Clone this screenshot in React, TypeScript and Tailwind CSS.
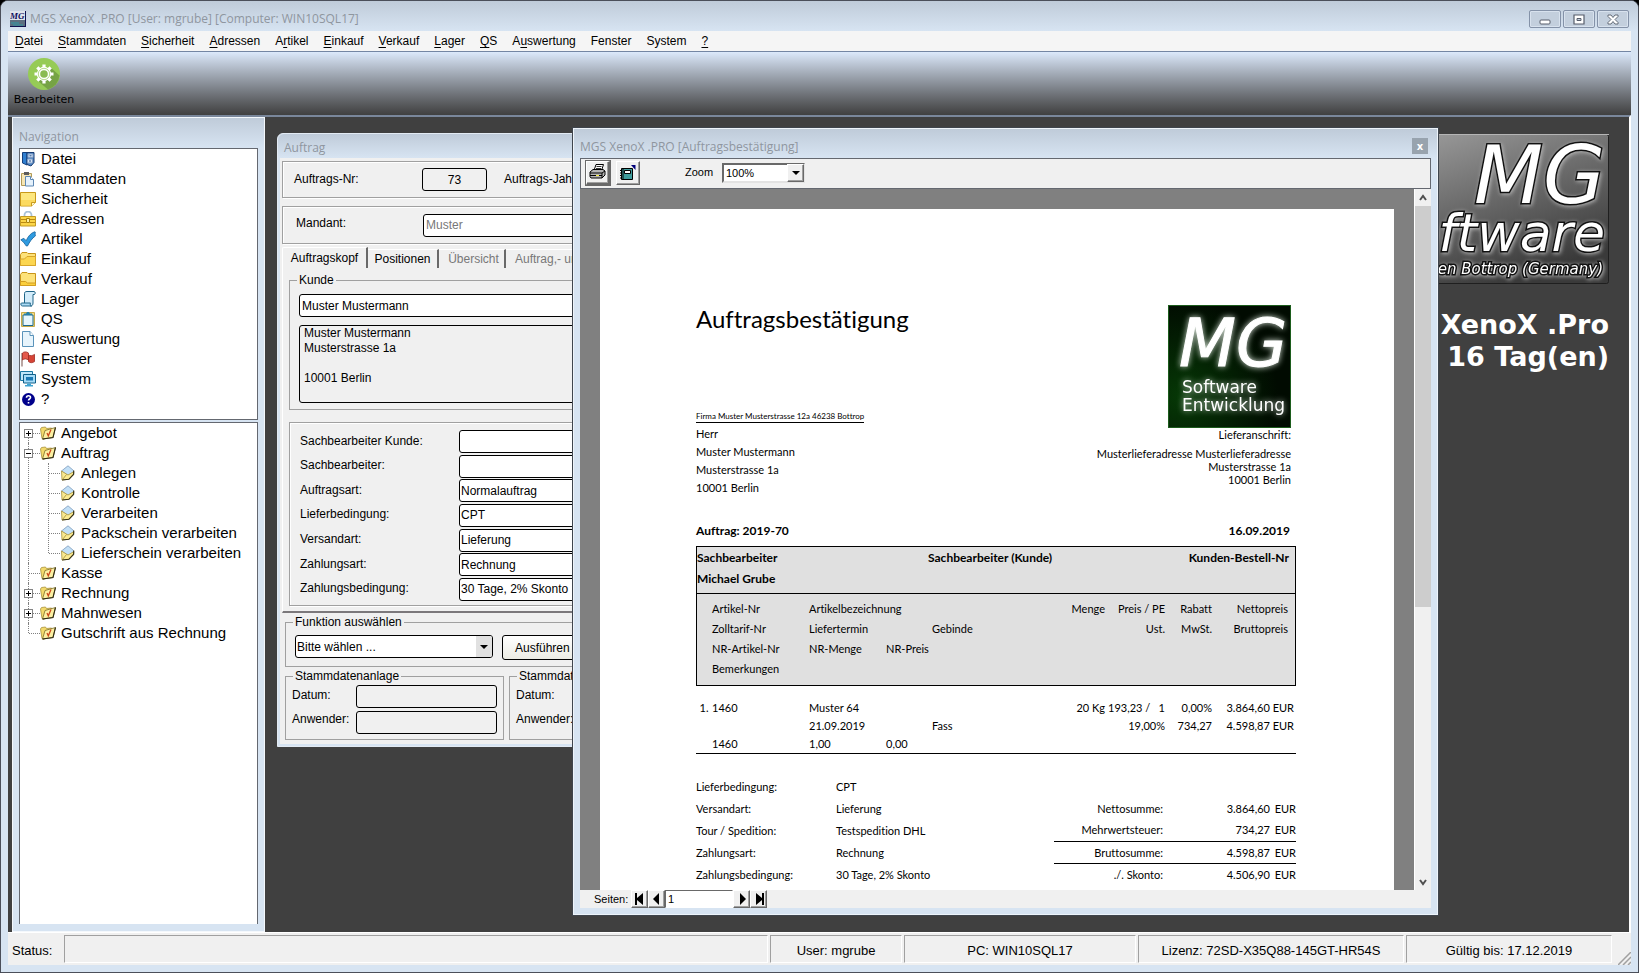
import { Fragment, type ReactNode } from "react";
import clsx from "clsx";

const MENU: Array<[string, string, string]> = [
  ["", "D", "atei"],
  ["", "S", "tammdaten"],
  ["", "S", "icherheit"],
  ["", "A", "dressen"],
  ["A", "r", "tikel"],
  ["", "E", "inkauf"],
  ["", "V", "erkauf"],
  ["", "L", "ager"],
  ["", "Q", "S"],
  ["A", "u", "swertung"],
  ["Fenster", "", ""],
  ["System", "", ""],
  ["", "?", ""],
];

const NAV_ITEMS = [
  "Datei",
  "Stammdaten",
  "Sicherheit",
  "Adressen",
  "Artikel",
  "Einkauf",
  "Verkauf",
  "Lager",
  "QS",
  "Auswertung",
  "Fenster",
  "System",
  "?",
];

interface TreeNode {
  label: string;
  state?: "open" | "closed";
  children?: string[];
}

const TREE: TreeNode[] = [
  { label: "Angebot", state: "closed" },
  {
    label: "Auftrag",
    state: "open",
    children: [
      "Anlegen",
      "Kontrolle",
      "Verarbeiten",
      "Packschein verarbeiten",
      "Lieferschein verarbeiten",
    ],
  },
  { label: "Kasse" },
  { label: "Rechnung", state: "closed" },
  { label: "Mahnwesen", state: "closed" },
  { label: "Gutschrift aus Rechnung" },
];

const ORDER_FIELDS = [
  { id: "sb-kunde", label: "Sachbearbeiter Kunde:", value: "" },
  { id: "sb", label: "Sachbearbeiter:", value: "" },
  { id: "auftragsart", label: "Auftragsart:", value: "Normalauftrag" },
  { id: "lieferbedingung", label: "Lieferbedingung:", value: "CPT" },
  { id: "versandart", label: "Versandart:", value: "Lieferung" },
  { id: "zahlungsart", label: "Zahlungsart:", value: "Rechnung" },
  { id: "zahlungsbedingung", label: "Zahlungsbedingung:", value: "30 Tage, 2% Skonto" },
];

const TERMS = [
  ["Lieferbedingung:", "CPT"],
  ["Versandart:", "Lieferung"],
  ["Tour / Spedition:", "Testspedition DHL"],
  ["Zahlungsart:", "Rechnung"],
  ["Zahlungsbedingung:", "30 Tage, 2% Skonto"],
];

const SUMS = [
  { label: "Nettosumme:", value: "3.864,60", line: false },
  { label: "Mehrwertsteuer:", value: "734,27", line: false },
  { label: "Bruttosumme:", value: "4.598,87", line: true },
  { label: "./. Skonto:", value: "4.506,90", line: true },
];

function Svg({ children }: { children: ReactNode }) {
  return (
    <svg className="h-4 w-4 shrink-0" viewBox="0 0 16 16" aria-hidden="true">
      {children}
    </svg>
  );
}

function NavIcon({ name }: { name: string }) {
  switch (name) {
    case "Datei":
      return (
        <Svg>
          <path d="M2.5 1.5H7v12.500L2.500 12z" fill="#2f7fd0" stroke="#123f7d" />
          <path d="M7 1.500h7v10L11 15l-4-1.500z" fill="#4f86c6" stroke="#183c72" />
          <path d="M8 3h5v3.500H8zM7.500 8h5v4h-5z" fill="#d5e3f4" stroke="#7f9cc4" />
          <path d="M9.500 4.800h2M9 10h2" stroke="#234f8d" />
        </Svg>
      );
    case "Stammdaten":
      return (
        <Svg>
          <path d="M1.500 2.500h10v12h-10z" fill="#f7e6b4" stroke="#b19a57" />
          <path d="M4 1h5v3H4z" fill="#5b5b5b" />
          <path d="M5.500 5.500h5l3 3v6.500h-8z" fill="#e6f2fc" stroke="#5d87b3" />
          <path d="M10.500 5.500v3h3" fill="#fff" stroke="#5d87b3" />
        </Svg>
      );
    case "Sicherheit":
      return (
        <Svg>
          <path d="M.5 1.500h15v10l-4 3.500H.5z" fill="#fde77f" stroke="#c99a1b" />
          <path d="M1 9h14v2.500L11.500 15H1z" fill="#fbd24a" opacity=".6" />
          <path d="M11.500 15v-3.500h4" fill="#fff6c9" stroke="#c99a1b" />
        </Svg>
      );
    case "Adressen":
      return (
        <Svg>
          <path d="M4.500 6V4a3.500 3.500 0 0 1 7 0v2" fill="none" stroke="#a9c2d8" strokeWidth="1.800" />
          <path d="M.5 5.500h15v9.500H.5z" fill="#fbd548" stroke="#c39a22" />
          <path d="M1 8.500h5M10 8.500h5M1 11.500h5M10 11.500h5" stroke="#bb8a12" />
          <path d="M6.500 7.500h3v4h-3z" fill="#fff1a8" stroke="#a8820f" />
        </Svg>
      );
    case "Artikel":
      return (
        <Svg>
          <path
            d="M.8 8.800l3-1.500 2.400 2.400C8 5.500 10.500 2.300 14.500.8l.8.3c-.3 1.200-.3 2.600.1 3.800C11.800 7.500 9.500 11 7.500 15H6.300C4.800 12.500 3 10.500.8 8.800z"
            fill="#2f9be0"
            stroke="#17629c"
            strokeWidth=".8"
          />
        </Svg>
      );
    case "Einkauf":
      return (
        <Svg>
          <path d="M.5 3.500l1.500-2h5l1 1h7.500v12H.5z" fill="#fde27a" stroke="#c9951a" />
          <path d="M.5 8h4l2.500-2.500h8.500v9H.5z" fill="#fcd650" stroke="#d8a62a" />
        </Svg>
      );
    case "Verkauf":
      return (
        <Svg>
          <path d="M.5 3.500l1.500-2h5l1 1h7.500v12H.5z" fill="#fde27a" stroke="#c9951a" />
          <path d="M.5 10.500h5l2 1.500h8v2.500H.5z" fill="#fbcf3c" stroke="#d29d20" />
        </Svg>
      );
    case "Lager":
      return (
        <Svg>
          <path d="M4.500 12V2.500C4.500 1 5.500.5 7 .5h7c1.500 0 1.500 2.500.5 3H13v8.500c0 2-1 3-2.500 3" fill="#d3ecfa" stroke="#1e6487" />
          <path d="M1.500 12h9c-.8 1 0 3 1 3H2.500C.5 15 .5 12 1.500 12z" fill="#aedcf5" stroke="#1e6487" />
        </Svg>
      );
    case "QS":
      return (
        <Svg>
          <path d="M1.500 1.500h13v14h-13z" fill="#f2dc86" stroke="#c9aa48" />
          <path d="M3 4h10v10.500H3z" fill="#e6f6fd" stroke="#1c6a90" />
          <path d="M4 4V2.500h2L7 1h2l1 1.500h2V4z" fill="#2680a8" />
        </Svg>
      );
    case "Auswertung":
      return (
        <Svg>
          <path d="M2.500.5H10l3.500 4v11h-11z" fill="#e7f4fc" stroke="#5a93ba" />
          <path d="M10 .5v4h3.500" fill="#fff" stroke="#5a93ba" />
        </Svg>
      );
    case "Fenster":
      return (
        <Svg>
          <path d="M2 2v13.500" stroke="#8b6c66" strokeWidth="1.200" />
          <path d="M2.500 2C4 .5 6.500.5 8.500 2v7C6.500 7.500 4 7.500 2.500 9z" fill="#e4594b" stroke="#a02b22" strokeWidth=".8" />
          <path d="M8.500 4c2 1 4 .8 6-.6v7.200c-2 1.400-4.500 1.500-6 0z" fill="#d64436" stroke="#a02b22" strokeWidth=".8" />
        </Svg>
      );
    case "System":
      return (
        <Svg>
          <path d="M.5.500h12v9H.5z" fill="#c0e6fa" stroke="#1876a3" />
          <path d="M3.500 3.500h12v8.500h-12z" fill="#a5dbf7" stroke="#125f88" />
          <path d="M6 6h7v3.500H6z" fill="#1a78b4" />
          <path d="M7 12.500h4v1.500h2v1.500H5v-1.500h2z" fill="#3ea3d2" />
        </Svg>
      );
    default:
      return (
        <Svg>
          <circle cx="8.500" cy="8.500" r="6.500" fill="#00008b" />
          <path d="M6.500 6.800c0-2.600 4-2.600 4-.3 0 1.500-2 1.500-2 3M8.500 11v1.500" fill="none" stroke="#fff" strokeWidth="1.600" />
        </Svg>
      );
  }
}

function FolderIcon() {
  return (
    <Svg>
      <path d="M.5 4l1-1.500L5.500 2l1 1.500 5-.5v3L4 14.500l-2-1z" fill="#f3da6c" stroke="#a8923c" strokeWidth=".8" />
      <path d="M2.500 14L5 5.500l10.500-3L13 12.500z" fill="#fdf0a2" stroke="#7a6c2a" strokeWidth=".8" />
      <path d="M2.500 14L13 12.500l2.500-10" fill="none" stroke="#2e2a14" strokeWidth="1.100" />
      <path d="M7 8l1.300 2.800L11 4.500" fill="none" stroke="#cc4a1d" strokeWidth="1.300" />
    </Svg>
  );
}

function EnvelopeIcon() {
  return (
    <Svg>
      <path d="M1.500 6L8 .8l5.500 4.700.5 4-5 2z" fill="#c3e0f7" stroke="#7d9cbd" strokeWidth=".8" />
      <path d="M1.500 6l.5 9 7-.8 4.500-5L14 6.500 8 10z" fill="#faea92" stroke="#a8923c" strokeWidth=".8" />
      <path d="M2 15l7-.8 4.500-4.700.2-4" fill="none" stroke="#3a3518" strokeWidth="1.100" />
      <path d="M2.500 14.500L6.500 9.500" stroke="#a18c36" strokeWidth=".8" />
    </Svg>
  );
}

function TitleText({ children }: { children: ReactNode }) {
  return (
    <h2 className="font-['Open_Sans','Noto_Sans',sans-serif] text-[12px] leading-4 whitespace-nowrap text-[#8f969f]">
      {children}
    </h2>
  );
}

function CaptionButton({ label, children }: { label: string; children: ReactNode }) {
  return (
    <button
      type="button"
      aria-label={label}
      className="flex h-[18px] w-8 items-center justify-center rounded-xs border border-[#8492a8] bg-[#c3cfdd] shadow-[inset_0_0_0_1px_#d8e2ee]"
    >
      <svg className="h-[11px] w-3" viewBox="0 0 12 11">
        {children}
      </svg>
    </button>
  );
}

function TitleBar() {
  return (
    <header className="flex h-[30px] items-start justify-between bg-linear-to-b from-[#bfcbd9] to-[#d7e4f2] pr-[9px] pl-[9px]">
      <div className="flex items-center gap-1 pt-[10px]">
        <svg className="h-4 w-4" viewBox="0 0 16 16">
          <rect width="16" height="16" fill="#dfe5ec" />
          <rect y="9" width="16" height="7" fill="#5e6f80" />
          <path d="M1 12h8M3 14h10" stroke="#2f9aa5" />
          <path d="M0 15.500h16M15.500 0v16" stroke="#11114e" />
          <text x="0" y="8" className="font-['Liberation_Serif',serif] text-[9px] font-bold italic" fill="#0d0d5c">
            MG
          </text>
        </svg>
        <h1 className="font-['Open_Sans','Noto_Sans',sans-serif] text-[12px] leading-4 whitespace-nowrap text-[#8f969f]">
          MGS XenoX .PRO [User: mgrube] [Computer: WIN10SQL17]
        </h1>
      </div>
      <div className="flex gap-[2px] pt-[9px]">
        <CaptionButton label="Minimieren">
          <rect x="1" y="6" width="10" height="4" rx="1" fill="#fff" stroke="#565d6b" />
        </CaptionButton>
        <CaptionButton label="Wiederherstellen">
          <path d="M1 1h10v9H1z" fill="#fff" stroke="#565d6b" strokeWidth="1.200" />
          <path d="M4 4.500h4v2H4z" fill="#c3cfdd" stroke="#565d6b" />
        </CaptionButton>
        <CaptionButton label="Schließen">
          <path d="M1 1h3l2 2.500L8 1h3v1.500L8 5.500l3 3V10H8L6 7.500 4 10H1V8.500l3-3-3-3z" fill="#fff" stroke="#565d6b" strokeWidth=".9" />
        </CaptionButton>
      </div>
    </header>
  );
}

function MenuBar() {
  return (
    <nav className="flex h-5 items-center gap-[15px] bg-[#f5f5f5] px-[7px] text-[12px]">
      {MENU.map(([pre, key, post]) => (
        <button key={pre + key + post} type="button">
          {pre}
          <span className="underline underline-offset-2">{key}</span>
          {post}
        </button>
      ))}
    </nav>
  );
}

function Toolbar() {
  return (
    <div className="flex h-16 border-t border-[#7486a3] bg-linear-to-b from-[#dce9fb] via-[#8a9099] to-[#404040] px-[5px] pt-[6px]">
      <button type="button" className="flex w-[62px] flex-col items-center gap-[2px]">
        <svg className="h-8 w-8" viewBox="0 0 32 32">
          <circle cx="16" cy="16" r="16" fill="#96cb56" />
          <path d="M22 9l9.500 8.500A16 16 0 0 1 20 31.500L10 23z" fill="#76a345" />
          <path
            d="M16 6.500v4M16 21.500v4M6.500 16h4M21.500 16h4M9.300 9.300l2.600 2.600M20.100 20.100l2.600 2.600M9.300 22.700l2.600-2.600M20.100 11.900l2.600-2.600"
            stroke="#fff"
            strokeWidth="3.200"
          />
          <circle cx="16" cy="16" r="5.500" fill="#8abb52" stroke="#fff" strokeWidth="3.400" />
          <circle cx="16" cy="16" r="5.700" fill="none" stroke="#96cb56" strokeWidth=".7" />
        </svg>
        <span className="font-['DejaVu_Sans',sans-serif] text-[11px] leading-4">Bearbeiten</span>
      </button>
    </div>
  );
}

function Navigation() {
  return (
    <aside className="flex w-[253px] shrink-0 flex-col border border-[#f4f8fc] bg-[#d7e4f2] px-[6px] pb-[7px] text-[15px]">
      <div className="-mx-[6px] flex h-[30px] items-end bg-linear-to-b from-[#bfcbd9] to-[#d7e4f2] px-[6px] pb-[3px]">
        <TitleText>Navigation</TitleText>
      </div>
      <ul className="mb-[2px] h-[272px] border border-[#646870] bg-white">
        {NAV_ITEMS.map((item) => (
          <li key={item} className="h-5">
            <a href="#" className="flex h-5 items-center gap-[5px]">
              <NavIcon name={item} />
              {item}
            </a>
          </li>
        ))}
      </ul>
      <ul className="flex-1 border border-b-0 border-[#646870] bg-white pl-1">
        {TREE.map((node, i) => (
          <li key={node.label} className="relative">
            <span
              className={clsx(
                "absolute left-1 border-l border-dotted border-[#808080]",
                i === 0 ? "top-[10px] bottom-0" : i === TREE.length - 1 ? "top-0 h-[10px]" : "inset-y-0",
              )}
            />
            <div className="relative flex h-5 items-center">
              {node.state ? (
                <button
                  type="button"
                  aria-label={node.label}
                  className="h-[9px] w-[9px] border border-[#848484] bg-white"
                >
                  <svg className="block h-[7px] w-[7px]" viewBox="0 0 7 7">
                    <path d={node.state === "open" ? "M1 3.500h5" : "M1 3.500h5M3.500 1v5"} stroke="#000" />
                  </svg>
                </button>
              ) : null}
              <span
                className={clsx("border-t border-dotted border-[#808080]", node.state ? "w-[7px]" : "ml-[5px] w-[11px]")}
              />
              <a href="#" className="flex items-center gap-[5px]">
                <FolderIcon />
                {node.label}
              </a>
            </div>
            {node.children ? (
              <ul className="relative">
                <span className="absolute top-0 bottom-[10px] left-6 border-l border-dotted border-[#808080]" />
                {node.children.map((child) => (
                  <li key={child} className="flex h-5 items-center pl-[25px]">
                    <span className="w-[11px] border-t border-dotted border-[#808080]" />
                    <a href="#" className="flex items-center gap-[5px]">
                      <EnvelopeIcon />
                      {child}
                    </a>
                  </li>
                ))}
              </ul>
            ) : null}
          </li>
        ))}
      </ul>
    </aside>
  );
}

const FIELD = "h-[23px] rounded-[3px] border border-black px-[2px]";
const GROUP = "border border-[#a0a0a0] shadow-[1px_1px_0_#fff,inset_1px_1px_0_#fff]";

function StampGroup({ title, id, className }: { title: string; id: string; className: string }) {
  return (
    <fieldset className={clsx("h-[71px] border border-[#a0a0a0] px-[6px]", className)}>
      <legend className="ml-[1px] px-[2px] leading-[14px] whitespace-nowrap">{title}</legend>
      <div className="grid grid-cols-[64px_1fr] gap-y-[3px] pt-[2px]">
        <label htmlFor={`${id}-datum`} className="leading-5">
          Datum:
        </label>
        <input id={`${id}-datum`} readOnly className={clsx(FIELD, "w-[141px] bg-[#f0f0f0]")} />
        <label htmlFor={`${id}-anwender`} className="leading-4">
          Anwender:
        </label>
        <input id={`${id}-anwender`} readOnly className={clsx(FIELD, "w-[141px] bg-[#f0f0f0]")} />
      </div>
    </fieldset>
  );
}

function OrderWindow() {
  return (
    <section className="absolute top-4 left-3 w-[640px] rounded-t-md border border-[#e3ebf4] bg-[#d7e4f2] px-[2px] pb-[2px] text-[12px]">
      <div className="-mx-[2px] flex h-6 items-center rounded-t-md bg-linear-to-b from-[#bfcbd9] to-[#d7e4f2] px-[6px] pt-1">
        <TitleText>Auftrag</TitleText>
      </div>
      <div className="bg-[#f0f0f0] px-[2px] pt-[3px] pb-1">
        <div className={clsx(GROUP, "flex h-[37px] items-center pl-[11px]")}>
          <label htmlFor="auftrags-nr" className="w-32 pb-[2px]">
            Auftrags-Nr:
          </label>
          <input id="auftrags-nr" readOnly defaultValue="73" className={clsx(FIELD, "w-[65px] bg-[#f0f0f0] text-center")} />
          <label htmlFor="auftrags-jahr" className="ml-[17px] w-24 pb-[2px]">
            Auftrags-Jahr:
          </label>
          <input id="auftrags-jahr" readOnly defaultValue="2019" className={clsx(FIELD, "w-[65px] bg-[#f0f0f0] text-center")} />
        </div>
        <div className={clsx(GROUP, "mt-2 flex h-[38px] items-center pl-[13px]")}>
          <label htmlFor="mandant" className="w-[127px] pb-1">
            Mandant:
          </label>
          <input id="mandant" readOnly defaultValue="Muster" className={clsx(FIELD, "w-80 bg-white text-[#787878]")} />
        </div>

        <div role="tablist" className="mt-[3px] flex h-[21px] items-end">
          <button
            type="button"
            role="tab"
            aria-selected="true"
            className="h-[21px] w-[86px] rounded-tl-xs border-t border-r-2 border-l border-t-white border-r-[#696969] border-l-white"
          >
            Auftragskopf
          </button>
          <button type="button" role="tab" className="h-[19px] w-[71px] border-t border-r-2 border-t-white border-r-[#696969]">
            Positionen
          </button>
          <button
            type="button"
            role="tab"
            disabled
            className="h-[19px] w-[67px] border-t border-r-2 border-t-white border-r-[#696969] pl-1 text-[#787878]"
          >
            Übersicht
          </button>
          <button
            type="button"
            role="tab"
            disabled
            className="h-[19px] border-t border-r-2 border-t-white border-r-[#696969] px-[9px] whitespace-nowrap text-[#787878]"
          >
            Auftrag,- und Lieferdaten
          </button>
        </div>

        <div className="border-b-2 border-l border-b-[#7b787b] border-l-white pt-[5px] pr-2 pb-[5px] pl-[6px]">
          <fieldset className="h-[137px] border border-[#a0a0a0] px-[9px]">
            <legend className="-ml-[2px] px-[2px] leading-[14px]">Kunde</legend>
            <div className="flex flex-col gap-2 pt-[7px]">
              <input aria-label="Kunde" defaultValue="Muster Mustermann" className={clsx(FIELD, "bg-white")} />
              <textarea
                aria-label="Anschrift"
                readOnly
                defaultValue={"Muster Mustermann\nMusterstrasse 1a\n\n10001 Berlin"}
                className="h-[78px] resize-none rounded-[3px] border border-black px-1 leading-[15px]"
              />
            </div>
          </fieldset>
          <div className={clsx(GROUP, "mt-3 flex h-[184px] flex-col justify-between px-[10px] pt-[7px] pb-1")}>
            {ORDER_FIELDS.map((f) => (
              <div key={f.id} className="flex items-center">
                <label htmlFor={f.id} className="w-[159px] pb-[2px]">
                  {f.label}
                </label>
                <input id={f.id} defaultValue={f.value} className={clsx(FIELD, "min-w-0 flex-1 bg-white px-px")} />
              </div>
            ))}
          </div>
        </div>

        <div className="px-[3px] pt-[2px]">
          <fieldset className="h-[52px] border border-[#a0a0a0] px-[9px]">
            <legend className="-ml-[2px] px-[2px] leading-[14px]">Funktion auswählen</legend>
            <div className="flex gap-[9px] pt-[6px]">
              <div className="relative">
                <select
                  aria-label="Funktion auswählen"
                  className="h-[23px] w-[198px] appearance-none rounded-[3px] border border-black bg-white px-px"
                >
                  <option>Bitte wählen ...</option>
                </select>
                <span className="pointer-events-none absolute top-px right-px flex h-[21px] w-4 items-center justify-center rounded-r-xs bg-[#e1e1e1]">
                  <svg className="h-1 w-2" viewBox="0 0 8 4">
                    <path d="M0 0h8L4 4z" />
                  </svg>
                </span>
              </div>
              <button
                type="button"
                className="h-[25px] w-24 rounded-[3px] border border-black bg-linear-to-b from-white to-[#ecece4] pl-3 text-left"
              >
                Ausführen
              </button>
            </div>
          </fieldset>
          <div className="mt-[2px] flex gap-[5px]">
            <StampGroup title="Stammdatenanlage" id="anlage" className="w-[219px]" />
            <StampGroup title="Stammdatenänderung" id="aenderung" className="w-[219px]" />
          </div>
        </div>
      </div>
    </section>
  );
}

function GreenLogo() {
  return (
    <svg className="h-[123px] w-[123px]" viewBox="0 0 123 123" role="img" aria-label="MG Software Entwicklung">
      <defs>
        <radialGradient id="green" cx=".1" cy=".75" r=".8">
          <stop offset="0" stopColor="#063806" />
          <stop offset="1" stopColor="#010b01" />
        </radialGradient>
      </defs>
      <rect x=".5" y=".5" width="122" height="122" fill="url(#green)" stroke="#1c5c1c" />
      <g className="font-['DejaVu_Sans',Verdana,sans-serif] drop-shadow-[0_0_3px_#d5dfd5]" fill="#fff">
        <text x="11" y="61" className="text-[66px] italic" stroke="#fff">
          MG
        </text>
        <text x="14" y="88" className="text-[17px]">
          Software
        </text>
        <text x="14" y="106" className="text-[17px]">
          Entwicklung
        </text>
      </g>
    </svg>
  );
}

function CompanyBanner() {
  return (
    <div className="absolute top-[17px] right-5 flex flex-col items-end">
      <svg className="h-[150px] w-[260px]" viewBox="0 0 260 150" role="img" aria-label="MG Software">
        <defs>
          <linearGradient id="steel" x1="0" y1="0" x2=".6" y2="1">
            <stop offset="0" stopColor="#a8a8a8" />
            <stop offset=".55" stopColor="#6a6a6a" />
            <stop offset="1" stopColor="#3a3a3a" />
          </linearGradient>
        </defs>
        <rect x=".5" y=".5" width="259" height="149" rx="2" fill="url(#steel)" stroke="#1f1f1f" />
        <path d="M0 .5h260" stroke="#b5b5b5" />
        <g
          className="font-['DejaVu_Sans',Verdana,sans-serif] italic drop-shadow-[1px_1px_2px_#b9b9b9]"
          textAnchor="end"
          fill="#fff"
          stroke="#111"
          strokeWidth="3"
          paintOrder="stroke"
        >
          <text x="256" y="69" className="text-[80px]">
            MG
          </text>
          <text x="256" y="117" className="text-[52px]">
            Software
          </text>
          <text x="254" y="140" className="text-[15px]">
            en Bottrop (Germany)
          </text>
        </g>
      </svg>
      <p className="mt-[25px] text-right font-['DejaVu_Sans',Verdana,sans-serif] text-[27px] leading-8 font-bold text-white">
        XenoX .Pro
        <br />
        16 Tag(en)
      </p>
    </div>
  );
}

const RAISED =
  "border border-t-white border-l-white border-r-[#696969] border-b-[#696969] bg-[#f0f0f0] shadow-[inset_-1px_-1px_0_#a0a0a0]";

function PageButton({ label, d }: { label: string; d: string }) {
  return (
    <button type="button" aria-label={label} className={clsx(RAISED, "flex h-[18px] w-[17px] items-center justify-center")}>
      <svg className="h-3 w-3" viewBox="0 0 12 12">
        <path d={d} />
      </svg>
    </button>
  );
}

function ReportToolbar() {
  return (
    <div className="flex h-[31px] items-center border border-[#646870] bg-[#f0f0f0] pb-[2px] pl-[5px] text-[12px]">
      <button
        type="button"
        aria-label="Drucken"
        className={clsx(RAISED, "flex h-6 w-6 items-center justify-center border-r-2 border-b-2 outline outline-[#696969]")}
      >
        <svg className="h-4 w-[17px]" viewBox="0 0 17 16">
          <path d="M5 6.500L7 .5h7.500l-2 6" fill="#fff" stroke="#000" />
          <path d="M7.500 2.500h5M7 4.500h5" stroke="#000" strokeWidth=".8" />
          <path d="M1 8l3-2.500h10l2 1.500v4l-3 3H2l-1-1.500z" fill="#b5b5b5" stroke="#000" />
          <path d="M1 9h12l3-2M1 11.500h12M13 9v5" fill="none" stroke="#000" />
          <path d="M7 11.500h3" stroke="#f5e93c" strokeWidth="1.200" />
        </svg>
      </button>
      <button type="button" aria-label="Exportieren" className={clsx(RAISED, "ml-[6px] flex h-6 w-6 items-center justify-center")}>
        <svg className="h-4 w-4" viewBox="0 0 16 16">
          <path d="M1.500 3.500h11v11h-11z" fill="#3f9c9c" stroke="#000" />
          <path d="M4.500 5.500h6v3h-6z" fill="#fff" stroke="#000" />
          <path d="M3 3v12M0 5.500h2M0 8h2M0 10.500h2M0 13h2" stroke="#000" />
          <path d="M11 0h4.500v5z" fill="#00007c" />
        </svg>
      </button>
      <label htmlFor="zoom" className="ml-[45px] w-[37px] text-[11px]">
        Zoom
      </label>
      <div className="relative">
        <select
          id="zoom"
          className="block h-5 w-[83px] appearance-none border-2 border-t-[#696969] border-r-[#e3e3e3] border-b-[#e3e3e3] border-l-[#696969] bg-white pl-[2px] text-[11px]"
        >
          <option>100%</option>
        </select>
        <span className={clsx(RAISED, "pointer-events-none absolute top-px right-px flex h-[18px] w-[17px] items-center justify-center")}>
          <svg className="h-1 w-2" viewBox="0 0 8 4">
            <path d="M0 0h8L4 4z" />
          </svg>
        </span>
      </div>
    </div>
  );
}

function PositionTable() {
  return (
    <table className="w-full table-fixed border-collapse text-left">
      <colgroup>
        <col className="w-4" />
        <col className="w-[97px]" />
        <col className="w-[77px]" />
        <col className="w-[46px]" />
        <col className="w-[90px]" />
        <col className="w-[83px]" />
        <col className="w-[60px]" />
        <col className="w-[47px]" />
        <col />
      </colgroup>
      <thead className="bg-[#e0e0e0] outline -outline-offset-1 outline-black [&_td]:h-5 [&_td]:p-0 [&_th]:h-5 [&_th]:p-0 [&_th]:font-normal">
        <tr aria-hidden="true">
          <td colSpan={9} className="!h-[6px]" />
        </tr>
        <tr>
          <td />
          <th>Artikel-Nr</th>
          <th colSpan={3}>Artikelbezeichnung</th>
          <th className="text-right">Menge</th>
          <th className="text-right">Preis / PE</th>
          <th className="text-right">Rabatt</th>
          <th className="!pr-2 text-right">Nettopreis</th>
        </tr>
        <tr>
          <td />
          <th>Zolltarif-Nr</th>
          <th colSpan={2}>Liefertermin</th>
          <th>Gebinde</th>
          <td />
          <th className="text-right">Ust.</th>
          <th className="text-right">MwSt.</th>
          <th className="!pr-2 text-right">Bruttopreis</th>
        </tr>
        <tr>
          <td />
          <th>NR-Artikel-Nr</th>
          <th>NR-Menge</th>
          <th colSpan={2}>NR-Preis</th>
          <td colSpan={4} />
        </tr>
        <tr>
          <td />
          <th className="!h-[27px] !pb-2" colSpan={8}>
            Bemerkungen
          </th>
        </tr>
      </thead>
      <tbody className="border-b border-black [&_td]:h-[18px] [&_td]:p-0">
        <tr aria-hidden="true">
          <td colSpan={9} className="!h-[13px]" />
        </tr>
        <tr>
          <td className="text-center">1.</td>
          <td>1460</td>
          <td colSpan={3}>Muster 64</td>
          <td className="text-right">20 Kg</td>
          <td>
            <span className="flex justify-between pl-[3px] whitespace-nowrap">
              <span>193,23 /</span>
              <span>1</span>
            </span>
          </td>
          <td className="text-right">0,00%</td>
          <td className="!pr-[2px] text-right">3.864,60 EUR</td>
        </tr>
        <tr>
          <td />
          <td />
          <td colSpan={2}>21.09.2019</td>
          <td>Fass</td>
          <td />
          <td className="text-right">19,00%</td>
          <td className="text-right">734,27</td>
          <td className="!pr-[2px] text-right">4.598,87 EUR</td>
        </tr>
        <tr>
          <td />
          <td>1460</td>
          <td>1,00</td>
          <td>0,00</td>
          <td colSpan={5} />
        </tr>
      </tbody>
    </table>
  );
}

function ReportPage() {
  return (
    <article className="h-[1123px] w-[794px] bg-white pt-24 pr-[98px] pl-24 font-[Lato,'Open_Sans',sans-serif] text-[11px] leading-[14px] [font-variant-ligatures:none]">
      <div className="flex justify-between pr-[5px]">
        <div>
          <h3 className="text-[24px] leading-7">Auftragsbestätigung</h3>
          <p className="mt-[77px] w-fit border-b border-black text-[8px] leading-[12px]">
            Firma Muster Musterstrasse 12a 46238 Bottrop
          </p>
          <address className="mt-[2px] leading-[18px] not-italic">
            Herr
            <br />
            Muster Mustermann
            <br />
            Musterstrasse 1a
            <br />
            10001 Berlin
          </address>
        </div>
        <div className="flex flex-col items-end">
          <GreenLogo />
          <p className="text-right leading-[13px]">Lieferanschrift:</p>
          <address className="mt-[6px] text-right leading-[13px] not-italic">
            Musterlieferadresse Musterlieferadresse
            <br />
            Musterstrasse 1a
            <br />
            10001 Berlin
          </address>
        </div>
      </div>
      <div className="mt-[26px] flex items-center justify-between pr-[6px] text-[12px] leading-4 font-bold">
        <p>Auftrag: 2019-70</p>
        <p>16.09.2019</p>
      </div>
      <div className="mt-[7px] h-[47px] border border-b-0 border-black bg-[#e0e0e0] text-[12px] font-bold">
        <div className="flex h-[21px] items-center justify-between pr-[6px]">
          <p className="w-[231px]">Sachbearbeiter</p>
          <p className="flex-1">Sachbearbeiter (Kunde)</p>
          <p>Kunden-Bestell-Nr</p>
        </div>
        <p className="leading-[21px]">Michael Grube</p>
      </div>
      <PositionTable />
      <div className="mt-[22px] flex items-end justify-between">
        <dl className="grid grid-cols-[140px_1fr] leading-[22px]">
          {TERMS.map(([label, value]) => (
            <Fragment key={label}>
              <dt>{label}</dt>
              <dd>{value}</dd>
            </Fragment>
          ))}
        </dl>
        <table className="w-[242px] border-collapse text-right">
          <tbody className="[&_td]:p-0 [&_th]:p-0">
            {SUMS.map((s) => (
              <tr key={s.label} className={clsx("h-[22px]", s.line && "border-t border-black")}>
                <th scope="row" className="w-[109px] font-normal">
                  {s.label}
                </th>
                <td>{s.value}</td>
                <td className="w-[26px]">EUR</td>
              </tr>
            ))}
          </tbody>
        </table>
      </div>
    </article>
  );
}

function ReportWindow() {
  return (
    <section className="absolute top-[10px] left-[307px] flex h-[789px] w-[867px] flex-col border border-[#3f454d] bg-[#d7e4f2] px-[7px] pb-[7px] shadow-[inset_0_0_0_1px_#eef4fa]">
      <div className="-mx-[6px] mt-px flex h-[29px] shrink-0 items-end justify-between bg-linear-to-b from-[#bfcbd9] to-[#d7e4f2] px-[6px] pb-[3px]">
        <TitleText>MGS XenoX .PRO [Auftragsbestätigung]</TitleText>
        <button
          type="button"
          aria-label="Schließen"
          className="mr-[3px] mb-px h-4 w-4 bg-[#98a3ae] font-['DejaVu_Sans',sans-serif] text-[10px] leading-[13px] font-bold text-white"
        >
          x
        </button>
      </div>
      <ReportToolbar />
      <div className="flex min-h-0 flex-1">
        <div className="flex-1 overflow-hidden bg-[#808080] pt-5 pl-5">
          <ReportPage />
        </div>
        <div className="flex w-[17px] flex-col border-l border-white bg-[#f0f0f0]">
          <span className="flex h-[17px] shrink-0 items-center justify-center">
            <svg className="h-2 w-2" viewBox="0 0 8 8">
              <path d="M1 6l3-4 3 4" fill="none" stroke="#505050" strokeWidth="2" />
            </svg>
          </span>
          <span className="h-[401px] bg-[#cdcdcd]" />
          <span className="mt-auto flex h-[17px] items-center justify-center">
            <svg className="h-2 w-2" viewBox="0 0 8 8">
              <path d="M1 2l3 4 3-4" fill="none" stroke="#505050" strokeWidth="2" />
            </svg>
          </span>
        </div>
      </div>
      <div className="flex h-[18px] shrink-0 items-center bg-[#f0f0f0] pl-[14px] text-[11px]">
        <label htmlFor="seite" className="w-[37px]">
          Seiten:
        </label>
        <PageButton label="Erste Seite" d="M1 0h2v5l6-5v12L3 7v5H1z" />
        <PageButton label="Vorige Seite" d="M8 0v12L2 6z" />
        <input
          id="seite"
          defaultValue="1"
          className="h-[18px] w-[68px] border border-t-[#696969] border-r-white border-b-white border-l-[#696969] bg-white px-[2px]"
        />
        <PageButton label="Nächste Seite" d="M4 0v12l6-6z" />
        <PageButton label="Letzte Seite" d="M11 0H9v5L3 0v12l6-5v5h2z" />
      </div>
    </section>
  );
}

const PANEL =
  "flex h-7 items-center justify-center border border-t-[#a0a0a0] border-l-[#a0a0a0] border-r-white border-b-white pt-[3px]";

function StatusBar() {
  return (
    <footer className="flex h-[33px] items-center gap-[2px] border-t border-white bg-[#f0f0f0] pl-1 text-[13px]">
      <span className="w-[50px] pt-1">Status:</span>
      <span className={clsx(PANEL, "flex-1")} />
      <span className={clsx(PANEL, "w-[132px]")}>User: mgrube</span>
      <span className={clsx(PANEL, "w-[232px]")}>PC: WIN10SQL17</span>
      <span className={clsx(PANEL, "w-[266px]")}>Lizenz: 72SD-X35Q88-145GT-HR54S</span>
      <span className={clsx(PANEL, "w-[206px]")}>Gültig bis: 17.12.2019</span>
      <svg className="ml-1 h-[13px] w-[13px] self-end" viewBox="0 0 13 13">
        <path d="M0 13L13 0M5 13l8-8M10 13l3-3" stroke="#a0a0a0" strokeWidth="1.500" />
      </svg>
    </footer>
  );
}

export default function App() {
  return (
    <div className="h-screen bg-black">
      <div className="flex h-full flex-col overflow-hidden rounded-t-lg border border-[#4b4f5a] bg-[#d7e4f2] font-['Liberation_Sans',Arial,sans-serif] text-black">
        <TitleBar />
        <div className="mx-[7px] mb-[7px] flex min-h-0 flex-1 flex-col">
          <MenuBar />
          <Toolbar />
          <main className="flex min-h-0 flex-1 border-t-2 border-r-2 border-t-[#7a879b] border-r-white bg-[#404040] pl-1">
            <Navigation />
            <div className="relative flex-1 overflow-hidden">
              <CompanyBanner />
              <OrderWindow />
              <ReportWindow />
            </div>
          </main>
          <StatusBar />
        </div>
      </div>
    </div>
  );
}
